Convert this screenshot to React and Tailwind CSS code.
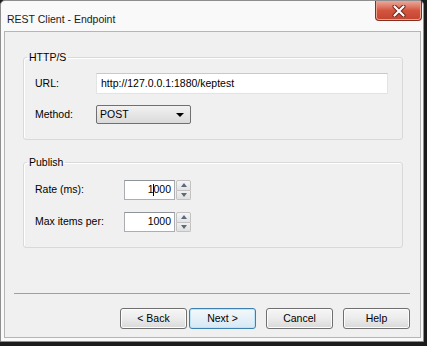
const Spinner = () => (
  <div className="flex flex-col w-[15px] h-[20px] ml-[1px]">
    <div className="flex-1 flex items-center justify-center border border-[#c2c2c2] bg-gradient-to-b from-[#f6f6f6] to-[#e3e3e3] rounded-t-[2px]">
      <svg width="6" height="4" viewBox="0 0 6 4">
        <path d="M0 4 L3 0 L6 4 Z" fill="#5a6a7a" />
      </svg>
    </div>
    <div className="flex-1 flex items-center justify-center border border-t-0 border-[#c2c2c2] bg-gradient-to-b from-[#f0f0f0] to-[#e0e0e0] rounded-b-[2px]">
      <svg width="6" height="4" viewBox="0 0 6 4">
        <path d="M0 0 L3 4 L6 0 Z" fill="#5a6a7a" />
      </svg>
    </div>
  </div>
)

const NumberField = ({ children }) => (
  <div className="flex items-center">
    <div className="w-[51px] h-[20px] bg-white border border-[#abadb3] border-t-[#8f9499] flex items-center justify-end pr-[3px]">
      {children}
    </div>
    <Spinner />
  </div>
)

const Button = ({ label, active }) => (
  <button
    className={`w-[67px] h-[21px] rounded-[3px] border text-[10.5px] text-black flex items-center justify-center ${
      active
        ? 'border-[#3c7fb1] bg-gradient-to-b from-[#f4f9fc] to-[#d6e8f4] shadow-[inset_0_0_0_1px_#bfe4f8]'
        : 'border-[#707070] bg-gradient-to-b from-[#f6f6f6] via-[#ebebeb] to-[#d9d9d9] shadow-[inset_0_0_0_1px_#fcfcfc]'
    }`}
  >
    {label}
  </button>
)

export default function App() {
  return (
    <div className="w-[427px] h-[346px] bg-[#1c1c1c] font-['Liberation_Sans',Arial,sans-serif] text-black">
      <div className="w-[424px] h-[342px] bg-[#f9f9f9] border border-[#8e8e8e] rounded-t-[5px] flex flex-col">
        {/* Title bar */}
        <div className="h-[30px] flex items-start justify-between">
          <span className="text-[10.5px] leading-[14px] ml-[6px] mt-[11px] text-[#1a1a1a]">
            REST Client - Endpoint
          </span>
          <div className="w-[47px] h-[20px] mr-[1px] rounded-b-[4px] border border-t-0 border-[#8a2c1e] bg-gradient-to-b from-[#e9a99c] via-[#d4553f] to-[#c24530] flex items-center justify-center shadow-[inset_0_0_0_1px_#eda392]">
            <svg width="14" height="12" viewBox="0 0 14 12">
              <path d="M2.5 1.5 L11.5 10.5 M11.5 1.5 L2.5 10.5" stroke="#6b2418" strokeWidth="4" strokeLinecap="round" />
              <path d="M2.5 1.5 L11.5 10.5 M11.5 1.5 L2.5 10.5" stroke="#ffffff" strokeWidth="2.2" strokeLinecap="round" />
            </svg>
          </div>
        </div>

        {/* Client area */}
        <div className="ml-[3px] w-[417px] h-[307px] bg-[#f0f0f0] border border-[#b5b5b5] flex flex-col text-[10.5px]">
          <fieldset className="ml-[18px] mt-[17px] w-[380px] border border-[#d9d9d9] rounded-[3px] pl-[11px] pt-[8px] pb-[15px] shadow-[inset_1px_1px_0_#ffffff]">
            <legend className="-ml-[8px] px-[2px] leading-[16px]">HTTP/S</legend>
            <div className="flex items-center">
              <span className="w-[61px]">URL:</span>
              <div className="w-[292px] h-[21px] bg-white border border-[#e3e3e3] border-t-[#c9c9c9] flex items-center pl-[4px]">
                http://127.0.0.1:1880/keptest
              </div>
            </div>
            <div className="flex items-center mt-[11px]">
              <span className="w-[61px]">Method:</span>
              <div className="w-[95px] h-[19px] border border-[#707070] rounded-[2px] bg-gradient-to-b from-[#f2f2f2] to-[#dadada] flex items-center justify-between pl-[3px] pr-[6px]">
                <span>POST</span>
                <svg width="8" height="4" viewBox="0 0 8 4">
                  <path d="M0 0 L8 0 L4 4 Z" fill="#000" />
                </svg>
              </div>
            </div>
          </fieldset>

          <fieldset className="ml-[18px] mt-[14px] w-[380px] border border-[#d9d9d9] rounded-[3px] pl-[11px] pt-[10px] pb-[15px] shadow-[inset_1px_1px_0_#ffffff]">
            <legend className="-ml-[8px] px-[2px] leading-[16px]">Publish</legend>
            <div className="flex items-center">
              <span className="w-[89px]">Rate (ms):</span>
              <NumberField>
                1<span className="inline-block w-px h-[12px] bg-black -mr-px" />000
              </NumberField>
            </div>
            <div className="flex items-center mt-[12px]">
              <span className="w-[89px]">Max items per:</span>
              <NumberField>1000</NumberField>
            </div>
          </fieldset>

          <div className="flex-1" />
          <div className="ml-[9px] mr-[10px] border-t border-[#a0a0a0]" />
          <div className="flex justify-end items-center pr-[10px] mt-[14px] mb-[8px]">
            <div className="flex gap-[2px]">
              <Button label="< Back" />
              <Button label="Next >" active />
            </div>
            <div className="flex gap-[10px] ml-[10px]">
              <Button label="Cancel" />
              <Button label="Help" />
            </div>
          </div>
        </div>
      </div>
    </div>
  )
}
